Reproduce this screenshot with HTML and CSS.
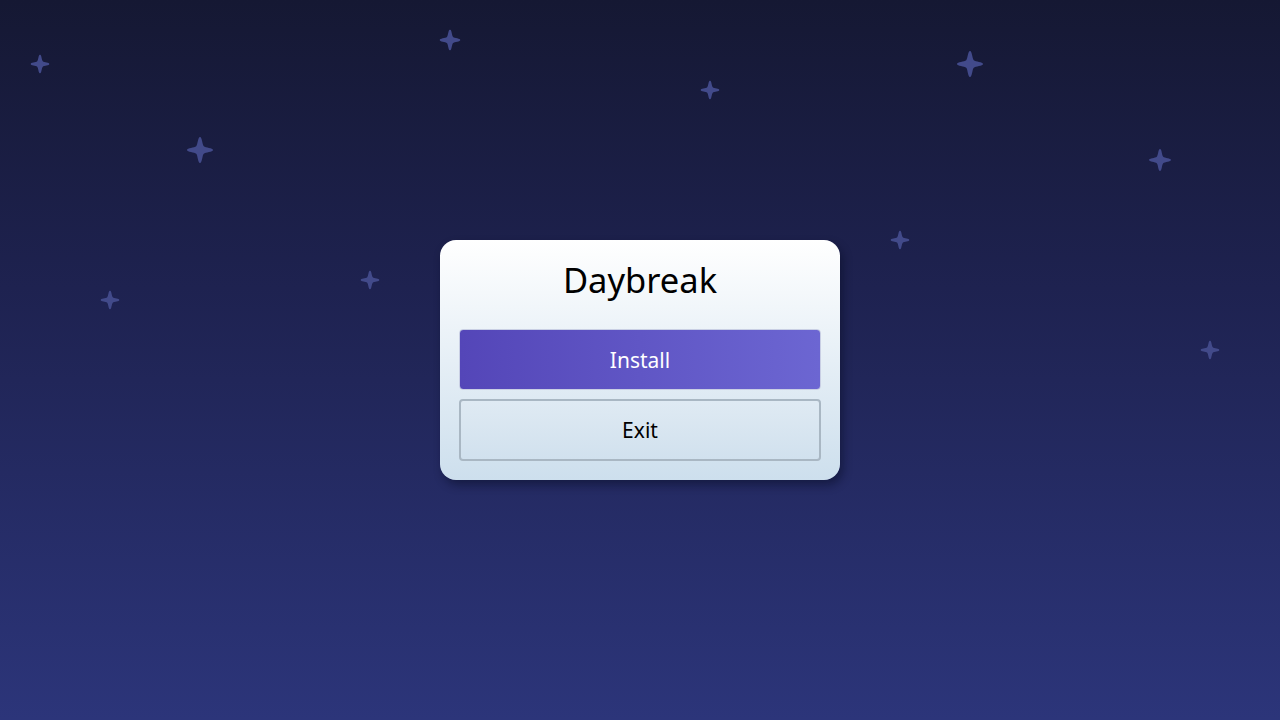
FILE: index.html
```html
<!DOCTYPE html>
<html lang="en">
<head>
    <meta charset="UTF-8">
    <title>Daybreak</title>
    <link rel="stylesheet" href="styles.css">
</head>
<body>
    <div class="sky">
        <svg class="star" style="left:40px;top:64px;width:19px;height:19px" viewBox="0 0 24 24"><path d="M12 0 C14 0 14 7 15.5 8.5 C17 10 24 10 24 12 C24 14 17 14 15.5 15.5 C14 17 14 24 12 24 C10 24 10 17 8.5 15.5 C7 14 0 14 0 12 C0 10 7 10 8.5 8.5 C10 7 10 0 12 0Z"/></svg>
        <svg class="star" style="left:450px;top:40px;width:21px;height:21px" viewBox="0 0 24 24"><path d="M12 0 C14 0 14 7 15.5 8.5 C17 10 24 10 24 12 C24 14 17 14 15.5 15.5 C14 17 14 24 12 24 C10 24 10 17 8.5 15.5 C7 14 0 14 0 12 C0 10 7 10 8.5 8.5 C10 7 10 0 12 0Z"/></svg>
        <svg class="star" style="left:710px;top:90px;width:19px;height:19px" viewBox="0 0 24 24"><path d="M12 0 C14 0 14 7 15.5 8.5 C17 10 24 10 24 12 C24 14 17 14 15.5 15.5 C14 17 14 24 12 24 C10 24 10 17 8.5 15.5 C7 14 0 14 0 12 C0 10 7 10 8.5 8.5 C10 7 10 0 12 0Z"/></svg>
        <svg class="star" style="left:970px;top:64px;width:26px;height:26px" viewBox="0 0 24 24"><path d="M12 0 C14 0 14 7 15.5 8.5 C17 10 24 10 24 12 C24 14 17 14 15.5 15.5 C14 17 14 24 12 24 C10 24 10 17 8.5 15.5 C7 14 0 14 0 12 C0 10 7 10 8.5 8.5 C10 7 10 0 12 0Z"/></svg>
        <svg class="star" style="left:200px;top:150px;width:26px;height:26px" viewBox="0 0 24 24"><path d="M12 0 C14 0 14 7 15.5 8.5 C17 10 24 10 24 12 C24 14 17 14 15.5 15.5 C14 17 14 24 12 24 C10 24 10 17 8.5 15.5 C7 14 0 14 0 12 C0 10 7 10 8.5 8.5 C10 7 10 0 12 0Z"/></svg>
        <svg class="star" style="left:1160px;top:160px;width:22px;height:22px" viewBox="0 0 24 24"><path d="M12 0 C14 0 14 7 15.5 8.5 C17 10 24 10 24 12 C24 14 17 14 15.5 15.5 C14 17 14 24 12 24 C10 24 10 17 8.5 15.5 C7 14 0 14 0 12 C0 10 7 10 8.5 8.5 C10 7 10 0 12 0Z"/></svg>
        <svg class="star" style="left:900px;top:240px;width:19px;height:19px" viewBox="0 0 24 24"><path d="M12 0 C14 0 14 7 15.5 8.5 C17 10 24 10 24 12 C24 14 17 14 15.5 15.5 C14 17 14 24 12 24 C10 24 10 17 8.5 15.5 C7 14 0 14 0 12 C0 10 7 10 8.5 8.5 C10 7 10 0 12 0Z"/></svg>
        <svg class="star" style="left:370px;top:280px;width:19px;height:19px" viewBox="0 0 24 24"><path d="M12 0 C14 0 14 7 15.5 8.5 C17 10 24 10 24 12 C24 14 17 14 15.5 15.5 C14 17 14 24 12 24 C10 24 10 17 8.5 15.5 C7 14 0 14 0 12 C0 10 7 10 8.5 8.5 C10 7 10 0 12 0Z"/></svg>
        <svg class="star" style="left:110px;top:300px;width:19px;height:19px" viewBox="0 0 24 24"><path d="M12 0 C14 0 14 7 15.5 8.5 C17 10 24 10 24 12 C24 14 17 14 15.5 15.5 C14 17 14 24 12 24 C10 24 10 17 8.5 15.5 C7 14 0 14 0 12 C0 10 7 10 8.5 8.5 C10 7 10 0 12 0Z"/></svg>
        <svg class="star" style="left:1210px;top:350px;width:19px;height:19px" viewBox="0 0 24 24"><path d="M12 0 C14 0 14 7 15.5 8.5 C17 10 24 10 24 12 C24 14 17 14 15.5 15.5 C14 17 14 24 12 24 C10 24 10 17 8.5 15.5 C7 14 0 14 0 12 C0 10 7 10 8.5 8.5 C10 7 10 0 12 0Z"/></svg>
    </div>

    <div class="card">
        <h1>Daybreak</h1>
        <button class="btn primary">Install</button>
        <button class="btn secondary">Exit</button>
    </div>
</body>
</html>
```
FILE: styles.css
```css
body {
    font-family: "Noto Sans", "Open Sans", sans-serif;
    background: linear-gradient(to bottom, #151833 0%, #1e2250 40%, #2c357a 100%);
    margin: 0;
    padding: 0;
    height: 100vh;
    display: flex;
    justify-content: center;
    align-items: center;
    overflow: hidden;
}

.sky {
    position: absolute;
    inset: 0;
}

.star {
    position: absolute;
    transform: translate(-50%, -50%);
    fill: #424a8a;
    filter: blur(0.4px);
}

.card {
    position: relative;
    width: 362px;
    height: 221px;
    padding: 0 19px 19px;
    border-radius: 16px;
    background: linear-gradient(to bottom, #ffffff 0%, #e6eff6 50%, #cddfed 100%);
    box-shadow: 3px 5px 10px rgba(5, 8, 30, 0.45);
    display: flex;
    flex-direction: column;
    gap: 9px;
}

h1 {
    margin: 0;
    height: 80px;
    line-height: 80px;
    text-align: center;
    font-size: 34.5px;
    font-weight: 400;
    color: #000;
}

.btn {
    height: 62px;
    font-family: inherit;
    font-size: 21px;
    border-radius: 4px;
    cursor: pointer;
}

.primary {
    color: #fff;
    border: 1px solid #c9cfe4;
    background: linear-gradient(to right, #5446b8, #6c66d2);
}

.secondary {
    color: #000;
    border: 2px solid #a9b7c3;
    background: linear-gradient(to bottom, #dfeaf3, #d1e1ee);
}
```
